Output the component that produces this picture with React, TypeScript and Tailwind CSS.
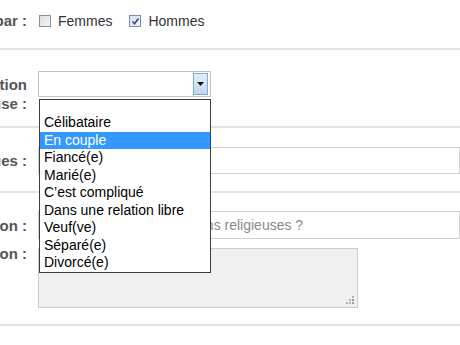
const options = [
  "Célibataire",
  "En couple",
  "Fiancé(e)",
  "Marié(e)",
  "C\u2019est compliqué",
  "Dans une relation libre",
  "Veuf(ve)",
  "Séparé(e)",
  "Divorcé(e)",
];

function Label({ children, className = "" }: { children: React.ReactNode; className?: string }) {
  return (
    <div
      className={`w-[27px] shrink-0 flex flex-col items-end whitespace-nowrap font-bold text-[15px] leading-[16px] text-[#555] ${className}`}
    >
      {children}
    </div>
  );
}

function Checkbox({ checked }: { checked?: boolean }) {
  return (
    <span
      className={`w-[12px] h-[12px] border flex items-center justify-center ${
        checked
          ? "border-[#7a8db0] bg-gradient-to-br from-[#d6e0f0] to-[#f4f7fc]"
          : "border-[#8f8f8f] bg-gradient-to-br from-[#dcdcdc] to-[#f7f7f7]"
      }`}
    >
      {checked && (
        <svg width="9" height="9" viewBox="0 0 9 9">
          <path d="M1.5 4.5 L3.5 6.8 L7.5 1.5" fill="none" stroke="#2f4a8a" strokeWidth="1.6" />
        </svg>
      )}
    </span>
  );
}

export default function App() {
  return (
    <div className="w-[460px] h-[345px] overflow-hidden bg-white font-['Liberation_Sans',Arial,sans-serif] text-[14px]">
      {/* intéressé par */}
      <div className="h-[50px] flex items-start pt-[13px] border-b-2 border-[#e4e4e4]">
        <Label>Intéressé(e) par :</Label>
        <div className="ml-[12px] flex items-center leading-[16px] text-[#333]">
          <Checkbox />
          <span className="ml-[7px]">Femmes</span>
          <span className="ml-[17px]">
            <Checkbox checked />
          </span>
          <span className="ml-[7px]">Hommes</span>
        </div>
      </div>

      {/* situation amoureuse */}
      <div className="h-[78px] flex items-start border-b-2 border-[#e4e4e4]">
        <Label className="mt-[25px] leading-[19px]">
          <span>Situation</span>
          <span>amoureuse :</span>
        </Label>
        <div className="relative ml-[11px] mt-[21px]">
          <div className="w-[173px] h-[26px] border border-[#c2c2c2] bg-white flex justify-end items-center pr-[2px]">
            <div className="w-[15px] h-[22px] border border-[#7fa9d6] bg-gradient-to-b from-[#e4f0fb] to-[#bcd7f1] flex items-center justify-center">
              <svg width="7" height="4" viewBox="0 0 7 4">
                <path d="M0 0 H7 L3.5 4 Z" fill="#111" />
              </svg>
            </div>
          </div>
          <div className="absolute z-10 left-[1px] top-[28px] w-[172px] border border-[#3c3c3c] bg-white text-[14px] text-black">
            <div className="h-[14px]" />
            {options.map((o) => (
              <div
                key={o}
                className={`h-[17.5px] leading-[17.5px] pl-[4px] whitespace-nowrap ${
                  o === "En couple" ? "bg-[#3399ff] text-white" : ""
                }`}
              >
                {o}
              </div>
            ))}
          </div>
        </div>
      </div>

      {/* langues */}
      <div className="h-[65px] flex items-start border-b-2 border-[#e4e4e4]">
        <Label className="mt-[25px]">Langues :</Label>
        <div className="ml-[11px] mt-[19px] w-[440px] h-[27px] border border-[#cfcfcf] bg-white" />
      </div>

      {/* religion + description */}
      <div className="h-[133px] border-b-2 border-[#e4e4e4]">
        <div className="flex items-start">
          <Label className="mt-[25px]">Religion :</Label>
          <div className="ml-[11px] mt-[18px] w-[440px] h-[28px] border border-[#cfcfcf] bg-white pl-[5px] flex items-center whitespace-nowrap text-[#8a8a8a]">
            Quelles sont vos convictions religieuses ?
          </div>
        </div>
        <div className="flex items-start">
          <Label className="mt-[7px]">Description :</Label>
          <div className="relative ml-[11px] mt-[9px] w-[320px] h-[60px] border border-[#cdcdcd] bg-[#f0f0f0]">
            <svg className="absolute right-[2px] bottom-[2px]" width="12" height="12" viewBox="0 0 12 12">
              <rect x="9" y="3" width="2" height="2" fill="#b5b5b5" />
              <rect x="6" y="6" width="2" height="2" fill="#b5b5b5" />
              <rect x="9" y="6" width="2" height="2" fill="#9a9a9a" />
              <rect x="3" y="9" width="2" height="2" fill="#b5b5b5" />
              <rect x="6" y="9" width="2" height="2" fill="#b5b5b5" />
              <rect x="9" y="9" width="2" height="2" fill="#9a9a9a" />
            </svg>
          </div>
        </div>
      </div>
    </div>
  );
}
